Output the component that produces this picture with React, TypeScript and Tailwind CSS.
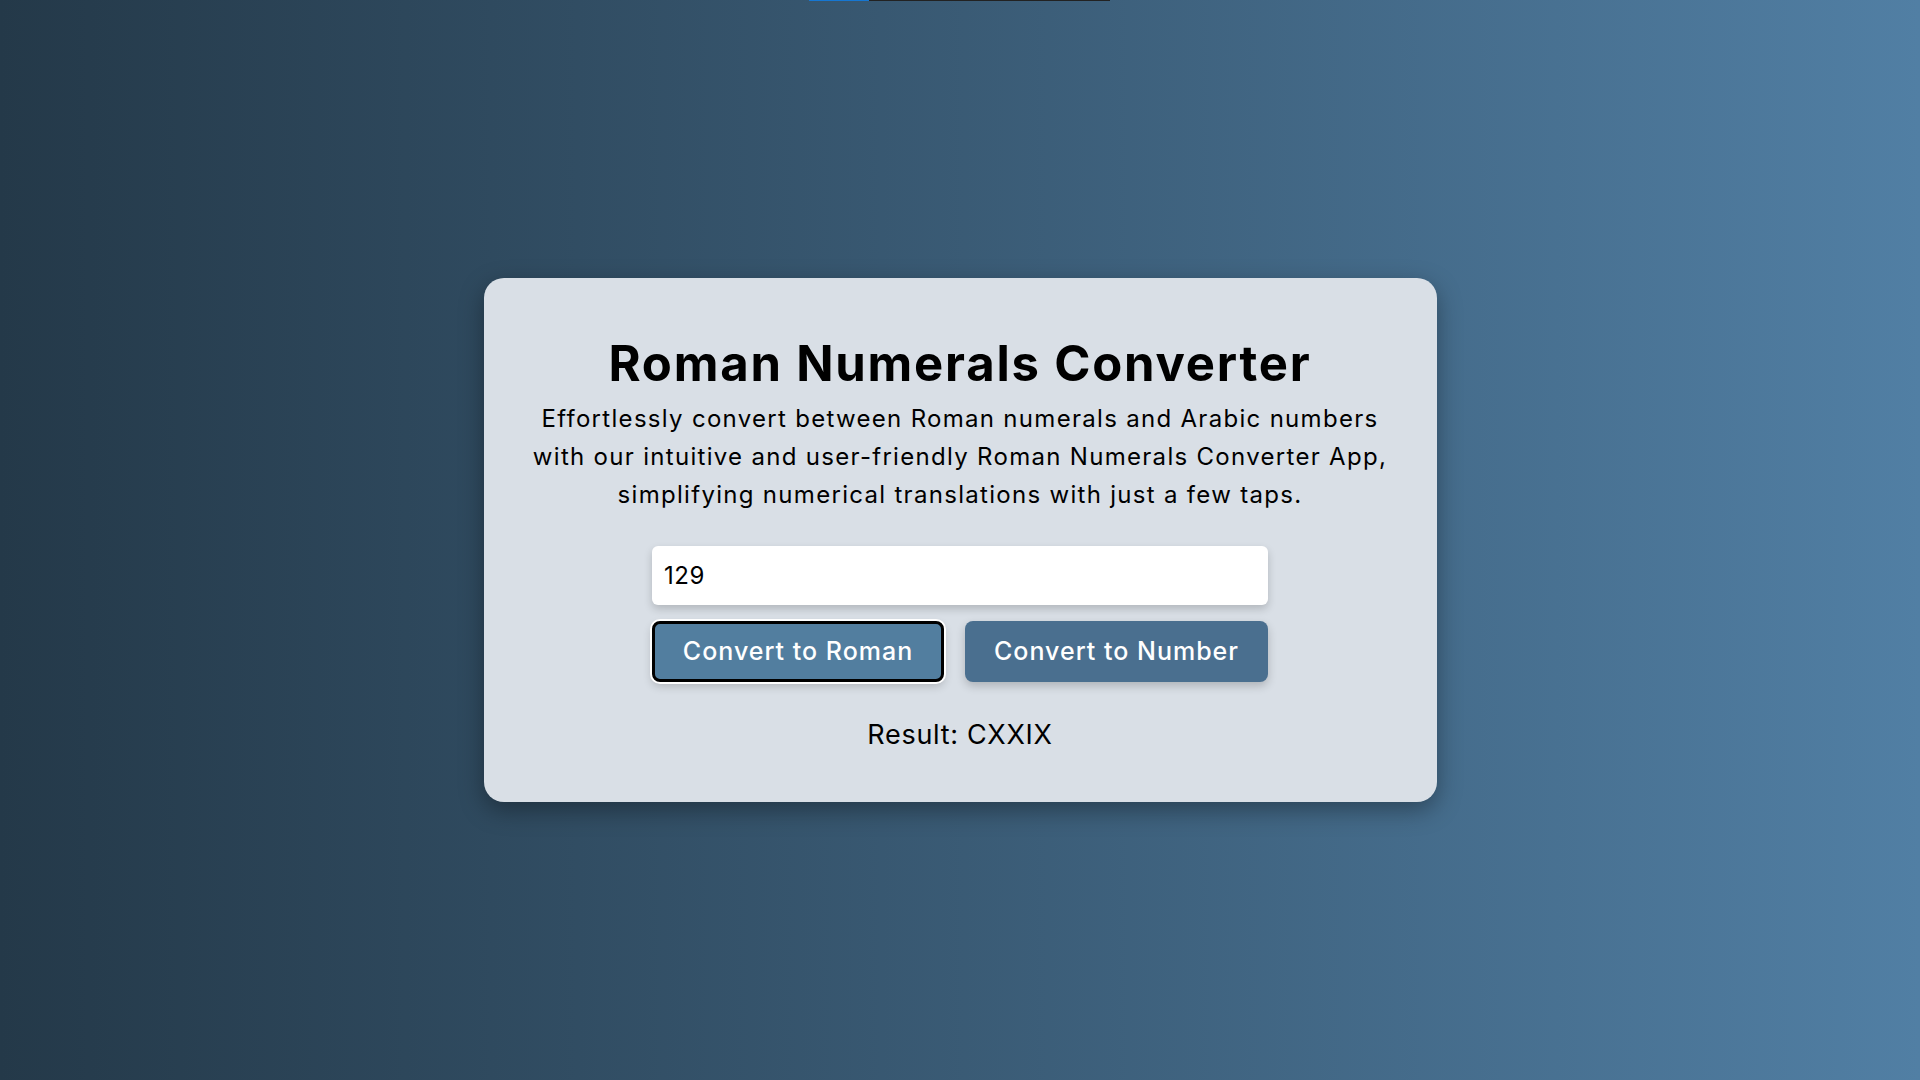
import { useState } from 'react';

const toRoman = (n: number) => {
  const map: [number, string][] = [
    [1000, 'M'], [900, 'CM'], [500, 'D'], [400, 'CD'], [100, 'C'], [90, 'XC'],
    [50, 'L'], [40, 'XL'], [10, 'X'], [9, 'IX'], [5, 'V'], [4, 'IV'], [1, 'I'],
  ];
  let out = '';
  for (const [v, s] of map) {
    while (n >= v) {
      out += s;
      n -= v;
    }
  }
  return out;
};

export default function App() {
  const [value, setValue] = useState('129');
  const [result, setResult] = useState('CXXIX');

  return (
    <div
      className="relative min-h-screen w-full flex items-center justify-center bg-gradient-to-r from-[#243949] to-[#517fa4]"
      style={{ fontFamily: 'Inter, "Open Sans", sans-serif' }}
    >
      {/* top progress strip */}
      <div className="absolute top-0 left-[809px] flex h-px">
        <div className="w-[60px] bg-[#1677d2]" />
        <div className="w-[241px] bg-[#222222]" />
      </div>

      <div className="w-[953px] rounded-[20px] bg-[#d9dfe6] px-12 pt-[50px] pb-[46px] text-center text-black shadow-[0_8px_24px_rgba(0,0,0,0.35)]">
        <h1 className="text-[49px] font-bold leading-[72px] tracking-[1.8px]">Roman Numerals Converter</h1>
        <p className="text-[24px] leading-[38px] tracking-[1.3px] whitespace-nowrap">
          Effortlessly convert between Roman numerals and Arabic numbers
          <br />
          with our intuitive and user-friendly Roman Numerals Converter App,
          <br />
          simplifying numerical translations with just a few taps.
        </p>

        <div className="mx-auto mt-8 w-[616px]">
          <input
            className="block h-[59px] w-full rounded-md bg-white px-3 text-[24px] tracking-[0.5px] text-black shadow-[0_4px_8px_rgba(0,0,0,0.18)] outline-none"
            value={value}
            onChange={(e) => setValue(e.target.value)}
          />
          <div className="mt-4 flex justify-between">
            <button
              type="button"
              className="h-[61px] w-[292px] rounded-lg border-[3px] border-black bg-[#527e9f] text-[25px] font-medium tracking-[1px] text-white ring-2 ring-white shadow-[0_4px_10px_rgba(0,0,0,0.2)]"
              onClick={() => setResult(toRoman(parseInt(value, 10) || 0))}
            >
              Convert to Roman
            </button>
            <button
              type="button"
              className="h-[61px] w-[303px] rounded-lg bg-[#4a6f8f] text-[25px] font-medium tracking-[1px] text-white shadow-[0_4px_10px_rgba(0,0,0,0.2)]"
            >
              Convert to Number
            </button>
          </div>
        </div>

        <div className="mt-8 text-[27px] leading-[42px] tracking-[0.7px]">Result: {result}</div>
      </div>
    </div>
  );
}
